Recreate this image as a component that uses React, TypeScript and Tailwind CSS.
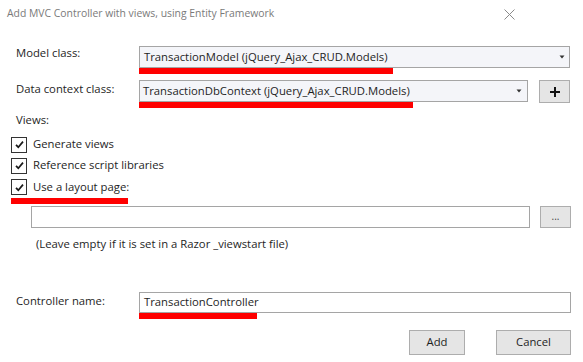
import React from "react";

const font = "font-['Segoe_UI','Open_Sans',sans-serif]";

const Check: React.FC = () => (
  <div className="w-[16px] h-[16px] border border-[#333] bg-white flex items-center justify-center">
    <svg width="11" height="11" viewBox="0 0 11 11">
      <path d="M2 5.8 L4.3 8.2 L9 2.6" fill="none" stroke="#1a1a1a" strokeWidth="1.7" />
    </svg>
  </div>
);

const Arrow: React.FC = () => (
  <svg width="6" height="4" viewBox="0 0 6 4">
    <path d="M0.5 0.5 H5.5 L3 3.5 Z" fill="#333" />
  </svg>
);

const RedBar: React.FC<{ w: string }> = ({ w }) => <div className={`${w} h-[6px] bg-[#ff0000]`} />;

const App: React.FC = () => {
  const views = ["Generate views", "Reference script libraries", "Use a layout page:"];

  return (
    <div className={`w-[583px] h-[362px] bg-white text-[11.3px] text-[#1e1e1e] overflow-hidden ${font}`}>
      {/* title bar */}
      <div className="h-[28px] flex items-center justify-between pl-[7px] pr-[68px]">
        <span className="text-[#7a7a7a] text-[10.4px]">Add MVC Controller with views, using Entity Framework</span>
        <svg width="11" height="11" viewBox="0 0 11 11">
          <path d="M0.5 0.5 L10.5 10.5 M10.5 0.5 L0.5 10.5" stroke="#8a8a8a" strokeWidth="1" />
        </svg>
      </div>

      {/* model class */}
      <div className="flex items-start pl-[16px] mt-[18px]">
        <div className="w-[123px] leading-[16px] -mt-px">Model class:</div>
        <div className="flex flex-col">
          <div className="w-[431px] h-[22px] border border-[#a5a5a5] bg-[#f4f5f9] flex items-center justify-between pl-[4px] pr-[4px]">
            <span>TransactionModel (jQuery_Ajax_CRUD.Models)</span>
            <Arrow />
          </div>
          <RedBar w="w-[254px]" />
        </div>
      </div>

      {/* data context class */}
      <div className="flex items-start pl-[16px] mt-[6px]">
        <div className="w-[123px] leading-[16px] mt-[1px]">Data context class:</div>
        <div className="flex flex-col">
          <div className="w-[389px] h-[22px] border border-[#a5a5a5] bg-[#f4f5f9] flex items-center justify-between pl-[3px] pr-[5px]">
            <span>TransactionDbContext (jQuery_Ajax_CRUD.Models)</span>
            <Arrow />
          </div>
          <RedBar w="w-[274px]" />
        </div>
        <div className="ml-[11px] w-[31px] h-[23px] border border-[#adadad] bg-[#e5e5e5] flex items-center justify-center">
          <svg width="12" height="12" viewBox="0 0 12 12">
            <path d="M6 1 V11 M1 6 H11" stroke="#111" strokeWidth="2" />
          </svg>
        </div>
      </div>

      {/* views */}
      <div className="pl-[16px] mt-[4px] leading-[16px]">Views:</div>
      <div className="mt-[6px] pl-[11px] flex flex-col">
        {views.map((v, i) => (
          <div key={i} className={`flex items-center gap-[6px] ${i === 2 ? "h-[22px]" : "h-[21px]"}`}>
            <Check />
            <span>{v}</span>
          </div>
        ))}
        <RedBar w="w-[117px]" />
      </div>

      {/* layout page */}
      <div className="flex items-center pl-[31px] mt-[2px]">
        <div className="w-[499px] h-[22px] border border-[#a5a5a5] bg-white" />
        <div className="ml-[10px] w-[31px] h-[22px] border border-[#adadad] bg-[#e5e5e5] flex items-center justify-center text-[10px] text-[#444] leading-none pb-[3px]">
          ...
        </div>
      </div>
      <div className="pl-[36px] mt-[8px] leading-[16px]">(Leave empty if it is set in a Razor _viewstart file)</div>

      {/* controller name */}
      <div className="flex items-start pl-[16px] mt-[40px]">
        <div className="w-[123px] leading-[16px] mt-[1px]">Controller name:</div>
        <div className="flex flex-col">
          <div className="w-[432px] h-[21px] border border-[#a5a5a5] bg-white flex items-center pl-[4px]">
            <span>TransactionController</span>
          </div>
          <RedBar w="w-[118px]" />
        </div>
      </div>

      {/* buttons */}
      <div className="flex justify-end gap-[31px] pr-[12px] mt-[11px]">
        <div className="w-[56px] h-[25px] border border-[#adadad] bg-[#e5e5e5] flex items-center justify-center">Add</div>
        <div className="w-[75px] h-[25px] border border-[#adadad] bg-[#e5e5e5] flex items-center justify-center">Cancel</div>
      </div>
    </div>
  );
};

export default App;
